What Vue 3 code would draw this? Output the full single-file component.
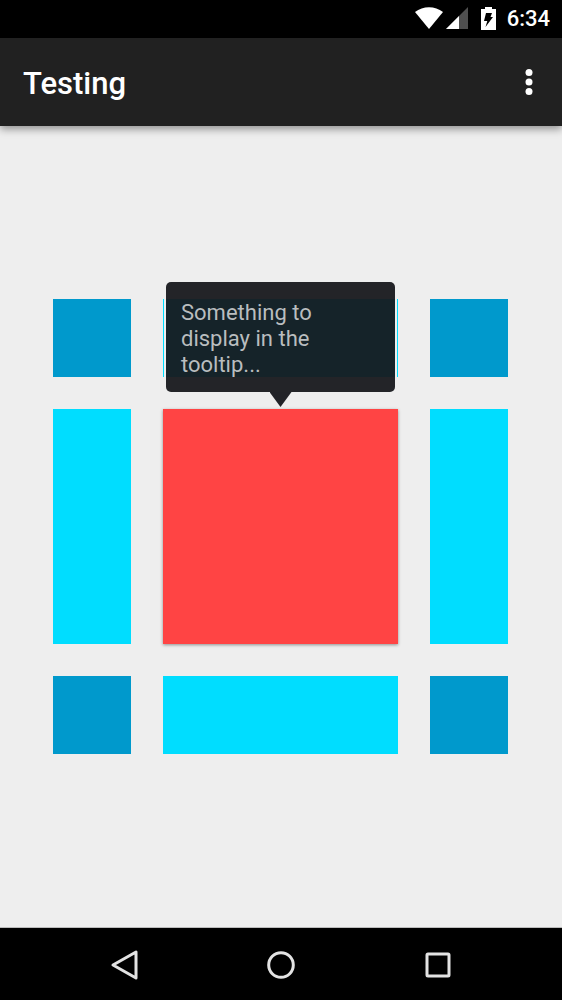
<script setup>
const tiles = [
  'corner', 'edge', 'corner',
  'edge', 'target', 'edge',
  'corner', 'edge', 'corner',
]
</script>

<template>
  <div class="screen">
    <div class="status">
      <svg class="wifi" width="28" height="22" viewBox="0 0 28 22" aria-label="Wi-Fi"><path fill="#fff" d="M14 22 0 5C8 -1.500 20 -1.500 28 5Z" /></svg>
      <svg class="signal" width="22" height="22" viewBox="0 0 22 22" aria-label="Signal"><path fill="#4f4f4f" d="M22 0v22H0Z" /><path fill="#fff" d="M13 9v13H0Z" /></svg>
      <svg class="battery" width="15" height="23" viewBox="0 0 15 23" aria-label="Charging"><path fill="#fff" d="M4 0h7v2h4v21H0V2h4Z" /><path fill="#000" d="M5 6h6L9.500 10H12L4.500 20 6.300 14H3Z" /></svg>
      <span class="clock">6:34</span>
    </div>
    <header class="bar">
      <h1>Testing</h1>
      <button class="more" aria-label="More options">
        <svg width="8" height="26" viewBox="0 0 8 26" fill="#fff"><circle cx="4" cy="3.500" r="3.500" /><circle cx="4" cy="13" r="3.500" /><circle cx="4" cy="22.500" r="3.500" /></svg>
      </button>
    </header>
    <main class="content">
      <div class="grid">
        <div v-for="(kind, i) in tiles" :key="i" class="tile" :class="kind">
          <div v-if="kind === 'target'" class="tooltip" role="tooltip">
            <p>Something to display in the tooltip...</p>
            <span class="arrow"></span>
          </div>
        </div>
      </div>
    </main>
    <nav class="nav">
      <button aria-label="Back">
        <svg width="32" height="32" viewBox="0 0 32 32"><path d="M28 3v26L5 16Z" /></svg>
      </button>
      <button aria-label="Home">
        <svg width="32" height="32" viewBox="0 0 32 32"><circle cx="16" cy="16" r="12.300" /></svg>
      </button>
      <button aria-label="Recent apps">
        <svg width="32" height="32" viewBox="0 0 32 32"><rect x="5" y="5" width="22" height="22" rx="1" /></svg>
      </button>
    </nav>
  </div>
</template>

<style>
body {
  background: #eee;
}
</style>

<style scoped>
.screen {
  display: flex;
  flex-direction: column;
  min-height: 100vh;
  font-family: Roboto, "Liberation Sans", sans-serif;
}
button {
  display: flex;
  align-items: center;
  justify-content: center;
  padding: 0;
  border: 0;
  background: none;
}
.status {
  display: flex;
  align-items: center;
  justify-content: flex-end;
  height: 38px;
  padding: 0 12px 2px 0;
  box-sizing: border-box;
  background: #000;
  color: #fff;
}
.wifi {
  margin-right: 3px;
}
.signal {
  margin-right: 13px;
}
.battery {
  margin-right: 11px;
}
.clock {
  padding-top: 2px;
  font-size: 22px;
  font-weight: 500;
  line-height: 26px;
}
.bar {
  display: flex;
  align-items: center;
  justify-content: space-between;
  height: 88px;
  padding: 0 17px 0 23px;
  background: #212121;
  box-shadow: 0 3px 8px rgba(0, 0, 0, 0.4);
}
h1 {
  margin: 0;
  padding-top: 3px;
  color: #fff;
  font-size: 31px;
  font-weight: 500;
  line-height: 36px;
}
.more {
  width: 32px;
  height: 48px;
}
.content {
  display: flex;
  flex: 1;
  align-items: center;
  padding: 0 54px 0 53px;
  border-bottom: 1px solid #bbb;
}
.grid {
  display: grid;
  flex: 1;
  grid-template-columns: 78px 1fr 78px;
  grid-template-rows: 78px auto 78px;
  gap: 32px;
}
.corner {
  background: #0099cc;
}
.edge {
  background: #00ddff;
}
.target {
  position: relative;
  aspect-ratio: 1;
  background: #ff4444;
  box-shadow: 0 1px 3px rgba(0, 0, 0, 0.4);
}
.tooltip {
  position: absolute;
  right: 3px;
  bottom: calc(100% + 17px);
  left: 3px;
  padding: 18px 60px 14px 15px;
  border-radius: 5px;
  background: rgba(22, 23, 28, 0.94);
  box-shadow: 0 0 0 2px #eee;
}
.tooltip p {
  margin: 0;
  color: #b9bdbf;
  font-size: 22px;
  line-height: 26px;
}
.arrow {
  position: absolute;
  top: 100%;
  left: 50%;
  width: 22px;
  height: 15px;
  margin-left: -11px;
  background: #222328;
  clip-path: polygon(0 0, 100% 0, 50% 100%);
}
.nav {
  display: flex;
  align-items: center;
  justify-content: center;
  gap: 77px;
  height: 72px;
  padding: 2px 1px 0 0;
  box-sizing: border-box;
  background: #000;
}
.nav button {
  width: 80px;
  height: 48px;
}
.nav svg {
  fill: none;
  stroke: #e3e3e3;
  stroke-width: 3;
  stroke-linejoin: round;
}
</style>
